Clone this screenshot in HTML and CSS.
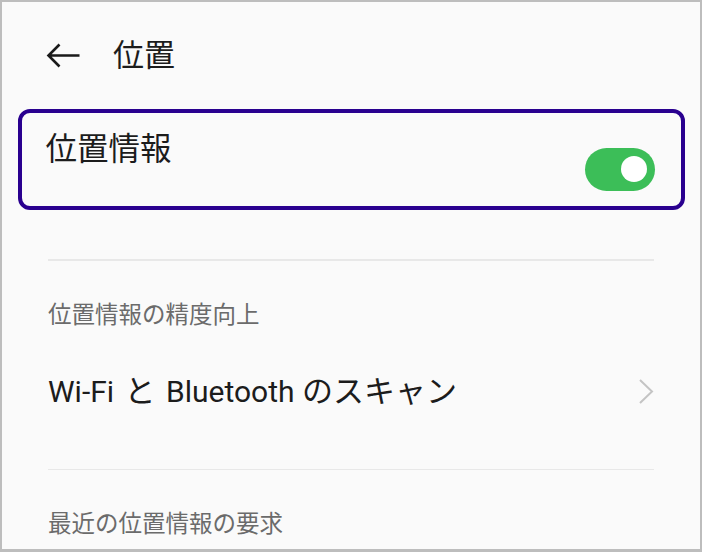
FILE: index.html
```html
<!DOCTYPE html>
<html lang="ja">
<head>
<meta charset="utf-8">
<link rel="stylesheet" href="styles.css">
</head>
<body>
<div class="frame">
  <header class="header">
    <svg class="back" width="34" height="25" viewBox="0 0 34 25" aria-hidden="true">
      <path d="M33.5 12.5H2.5M13.5 1.5L2.5 12.5L13.5 23.5" fill="none" stroke="#1a1a1a" stroke-width="2.6" stroke-linecap="butt" stroke-linejoin="miter"/>
    </svg>
    <h1 class="title">位置</h1>
  </header>
  <div class="card">
    <div class="card-title">位置情報</div>
    <div class="toggle"><span class="knob"></span></div>
  </div>
  <div class="list">
    <div class="divider"></div>
    <div class="subhead">位置情報の精度向上</div>
    <div class="row">
      <span class="row-label">Wi-Fi <span class="ja ja-to">と</span> Bluetooth <span class="ja">のスキャン</span></span>
      <svg class="chev" width="16" height="27" viewBox="0 0 16 27" aria-hidden="true">
        <path d="M2 2L14 13.5L2 25" fill="none" stroke="#c4c4c4" stroke-width="2"/>
      </svg>
    </div>
    <div class="divider divider-2"></div>
    <div class="subhead">最近の位置情報の要求</div>
  </div>
</div>
</body>
</html>
```

FILE: styles.css
```css
html, body {
  margin: 0;
  padding: 0;
  background: #fafafa;
}

.frame {
  box-sizing: border-box;
  width: 702px;
  height: 552px;
  border: 2px solid #bdbdbd;
  border-bottom-width: 3px;
  background: #fafafa;
  overflow: hidden;
  font-family: "Roboto", "Noto Sans CJK JP", sans-serif;
  color: #1c1c1c;
}

.header {
  height: 107px;
  display: flex;
  align-items: center;
  padding-left: 44px;
  box-sizing: border-box;
}

.back {
  display: block;
  flex: none;
}

.title {
  margin: 0 0 0 33px;
  font-size: 31px;
  font-weight: 400;
  line-height: 36px;
}

.card {
  box-sizing: border-box;
  height: 101px;
  margin: 0 15px 0 16px;
  border: 4.5px solid #29008f;
  border-radius: 12px;
  display: flex;
  justify-content: space-between;
  align-items: flex-start;
  padding: 0 26.5px 0 23.5px;
}

.card-title {
  margin-top: 19px;
  font-size: 31.5px;
  line-height: 36px;
}

.toggle {
  margin-top: 34.5px;
  width: 70px;
  height: 43px;
  border-radius: 22px;
  background: #3cbe58;
  display: flex;
  align-items: center;
  justify-content: flex-end;
  padding-right: 8px;
  box-sizing: border-box;
}

.knob {
  width: 26px;
  height: 26px;
  border-radius: 50%;
  background: #ffffff;
}

.list {
  padding: 0 46px;
}

.divider {
  height: 1.5px;
  background: #e8e8e8;
  margin-top: 49px;
}

.divider-2 {
  margin-top: 16px;
}

.subhead {
  margin-top: 38px;
  font-size: 23.5px;
  line-height: 32px;
  color: #6b6b6b;
}

.row {
  height: 122px;
  display: flex;
  align-items: center;
  justify-content: space-between;
}

.row-label {
  font-size: 30px;
  line-height: 34px;
  white-space: nowrap;
}

.ja {
  font-size: 31px;
  line-height: 34px;
}

.ja-to {
  margin: 0 3px;
}

.chev {
  display: block;
  flex: none;
}
```
